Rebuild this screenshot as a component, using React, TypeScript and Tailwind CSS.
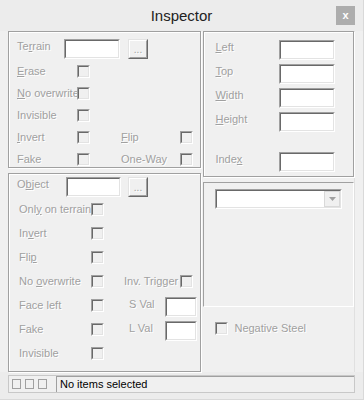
import React from "react";

const lbl = "text-[#a0a0a0] [text-shadow:1px_1px_0_#fff] leading-[13px] whitespace-nowrap";
const etched = "border border-[#a0a0a0] shadow-[inset_1px_1px_0_#fff,1px_1px_0_#fff]";

function U({ c }: { c: string }) {
  return <span className="underline underline-offset-[1px]">{c}</span>;
}

// sunken 3d box (textbox / checkbox)
function Sunken({ w, h, bg = "bg-white", children }: { w: string; h: string; bg?: string; children?: React.ReactNode }) {
  return (
    <div className={`${w} ${h} shrink-0 border border-t-[#a0a0a0] border-l-[#a0a0a0] border-r-white border-b-white`}>
      <div className={`w-full h-full border border-t-[#696969] border-l-[#696969] border-r-[#e3e3e3] border-b-[#e3e3e3] ${bg}`}>
        {children}
      </div>
    </div>
  );
}

function Check() {
  return <Sunken w="w-[13px]" h="h-[13px]" bg="bg-[#f0f0f0]" />;
}

function DotsButton() {
  return (
    <div className="w-[20px] h-[20px] shrink-0 border border-t-[#e3e3e3] border-l-[#e3e3e3] border-r-[#696969] border-b-[#696969]">
      <div className="w-full h-full border border-t-white border-l-white border-r-[#a0a0a0] border-b-[#a0a0a0] bg-[#f0f0f0] flex items-end justify-center">
        <span className={`${lbl} text-[10px] pb-[1px]`}>...</span>
      </div>
    </div>
  );
}

export default function App() {
  return (
    <div className="w-[364px] h-[400px] bg-[#ececec] font-['Liberation_Sans',Arial,sans-serif] text-[11px] border-r border-b border-[#d9d9d9] overflow-hidden">
      {/* title */}
      <div className="grid grid-cols-[1fr_auto_1fr] h-[31px] items-center">
        <div />
        <div className="text-[15px] text-[#222] leading-none pb-[1px]">Inspector</div>
        <div className="justify-self-end mr-[8px] w-[19px] h-[19px] bg-[#adadad] flex items-center justify-center text-white font-bold text-[11px] leading-none">
          x
        </div>
      </div>

      <div className="flex px-[8px] gap-[2px] bg-[#f0f0f0]">
        {/* left column */}
        <div className="w-[194px] flex flex-col gap-[5px]">
          {/* terrain panel */}
          <div className={`${etched} h-[137px]`}>
            <div className="flex items-start mt-[7px] pl-[8px] h-[20px]">
              <div className={`${lbl} w-[47px] pt-[1px]`}>Te<U c="r" />rain</div>
              <Sunken w="w-[56px]" h="h-[20px]" />
              <div className="ml-[8px]"><DotsButton /></div>
            </div>
            <div className="mt-[1px] pl-[8px]">
              {[
                [<><U c="E" />rase</>, null],
                [<><U c="N" />o overwrite</>, null],
                [<>Invisible</>, null],
                [<><U c="I" />nvert</>, <><U c="F" />lip</>],
                [<>Fake</>, <>One-Way</>],
              ].map(([a, b], i) => (
                <div key={i} className="flex items-center h-[22px]">
                  <div className={`${lbl} w-[60px]`}>{a}</div>
                  <Check />
                  {b && (
                    <>
                      <div className={`${lbl} ml-[31px] w-[59px]`}>{b}</div>
                      <Check />
                    </>
                  )}
                </div>
              ))}
            </div>
          </div>

          {/* object panel */}
          <div className={`${etched} h-[199px]`}>
            <div className="flex items-start mt-[3px] pl-[8px] h-[20px]">
              <div className={`${lbl} w-[49px] pt-[1px]`}>O<U c="b" />ject</div>
              <Sunken w="w-[55px]" h="h-[20px]" />
              <div className="ml-[7px]"><DotsButton /></div>
            </div>
            <div className="pl-[10px]">
              <div className="flex items-center h-[24px]">
                <div className={`${lbl} w-[72px]`}>Onl<U c="y" /> on terrain</div>
                <Check />
              </div>
              <div className="flex items-center h-[24px]">
                <div className={`${lbl} w-[72px]`}>In<U c="v" />ert</div>
                <Check />
              </div>
              <div className="flex items-center h-[24px]">
                <div className={`${lbl} w-[72px]`}>Fli<U c="p" /></div>
                <Check />
              </div>
              <div className="flex items-center h-[24px]">
                <div className={`${lbl} w-[72px]`}>No <U c="o" />verwrite</div>
                <Check />
                <div className={`${lbl} ml-[20px] w-[56px]`}>Inv. Trigger</div>
                <Check />
              </div>
              <div className="flex items-center h-[24px]">
                <div className={`${lbl} w-[72px]`}>Face left</div>
                <Check />
                <div className={`${lbl} ml-[25px] w-[36px] self-start pt-[5px]`}>S Val</div>
                <div className="self-start mt-[4px]"><Sunken w="w-[32px]" h="h-[20px]" /></div>
              </div>
              <div className="flex items-center h-[24px]">
                <div className={`${lbl} w-[72px]`}>Fake</div>
                <Check />
                <div className={`${lbl} ml-[25px] w-[36px] self-start pt-[5px]`}>L Val</div>
                <div className="self-start mt-[4px]"><Sunken w="w-[32px]" h="h-[20px]" /></div>
              </div>
              <div className="flex items-center h-[24px]">
                <div className={`${lbl} w-[72px]`}>Invisible</div>
                <Check />
              </div>
            </div>
          </div>
        </div>

        {/* right column */}
        <div className="w-[152px] flex flex-col border-r border-[#e0e0e0]">
          <div className={`${etched} h-[146px] pt-[8px] pl-[11px]`}>
            {[
              [<><U c="L" />eft</>, "h-[24px]"],
              [<><U c="T" />op</>, "h-[24px]"],
              [<><U c="W" />idth</>, "h-[24px]"],
              [<><U c="H" />eight</>, "h-[40px]"],
              [<>Inde<U c="x" /></>, "h-[24px]"],
            ].map(([l, h], i) => (
              <div key={i} className={`flex items-start ${h}`}>
                <div className={`${lbl} w-[64px] pt-[1px]`}>{l}</div>
                <Sunken w="w-[56px]" h="h-[20px]" />
              </div>
            ))}
          </div>

          <div className="mt-[5px] h-[125px] border border-t-[#a0a0a0] border-l-[#a0a0a0] border-r-white border-b-white pt-[6px] pl-[11px]">
            <Sunken w="w-[127px]" h="h-[20px]">
              <div className="flex justify-end h-full">
                <div className="w-[16px] h-full border border-[#d9d9d9] bg-[#f0f0f0] flex items-center justify-center">
                  <svg width="7" height="4" viewBox="0 0 7 4">
                    <path d="M0 0h7L3.5 4z" fill="#a0a0a0" />
                  </svg>
                </div>
              </div>
            </Sunken>
          </div>

          <div className="flex items-center mt-[15px] pl-[12px] gap-[6px]">
            <Check />
            <span className={lbl}>Negative Steel</span>
          </div>
        </div>
      </div>

      {/* status bar */}
      <div className="mx-[8px] mt-[3px] h-[18px] flex border border-[#c8c8c8] bg-[#f0f0f0]">
        <div className="flex items-center gap-[4px] pl-[3px] w-[47px]">
          <div className="w-[9px] h-[10px] border border-[#a0a0a0]" />
          <div className="w-[9px] h-[10px] border border-[#a0a0a0]" />
          <div className="w-[9px] h-[10px] border border-[#a0a0a0]" />
        </div>
        <div className="flex-1 border-l border-t border-l-[#a0a0a0] border-t-[#a0a0a0] flex items-center pl-[3px] text-black text-[11px] leading-none">
          No items selected
        </div>
      </div>
    </div>
  );
}
